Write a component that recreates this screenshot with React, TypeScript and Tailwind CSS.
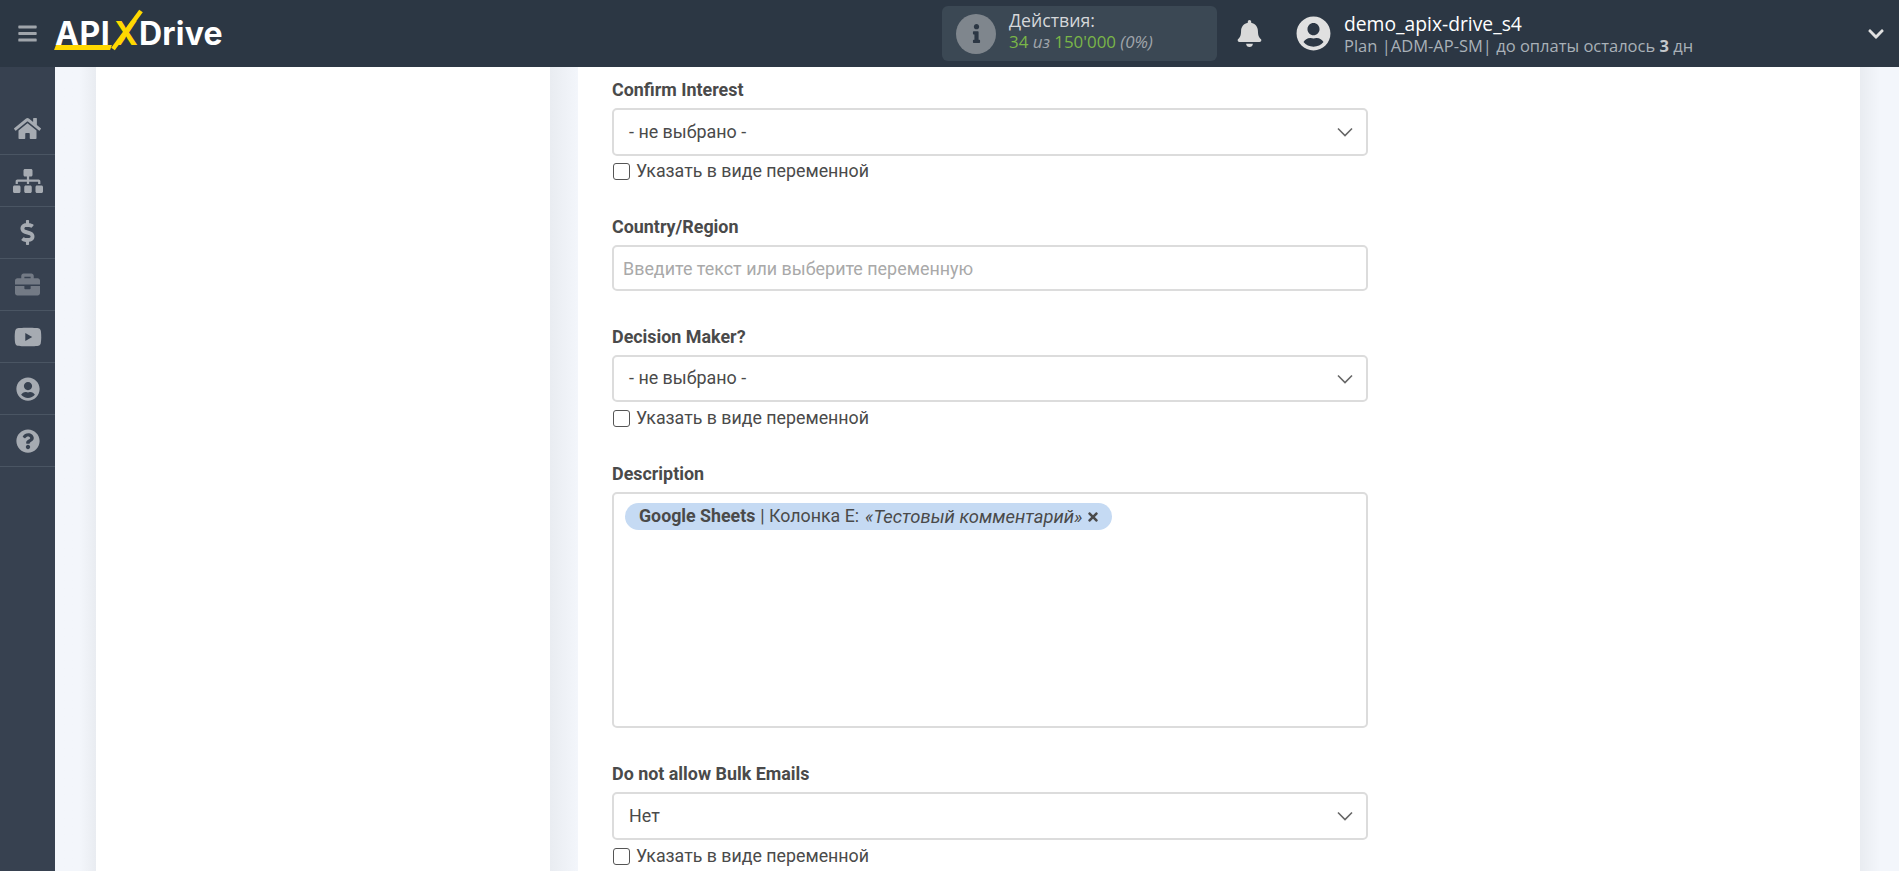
import { FaHome, FaSitemap, FaDollarSign, FaBriefcase, FaYoutube, FaUserCircle, FaQuestionCircle, FaBell, FaInfo, FaChevronDown, FaTimes, FaBars } from "react-icons/fa";

function Chevron() {
  return (
    <svg width="16" height="10" viewBox="0 0 16 10" fill="none" className="shrink-0">
      <path d="M1 1.5 L8 8.5 L15 1.5" stroke="#666" strokeWidth="1.6" />
    </svg>
  );
}

function Label({ children }: { children: React.ReactNode }) {
  return <div className="mb-[7px] h-[22px] text-[17.9px] leading-[22px] font-bold text-[#4a4a4a]">{children}</div>;
}

function Select({ value, label, h = "h-[47px]", gap = "mt-[4px]" }: { value: string; label: string; h?: string; gap?: string }) {
  return (
    <div>
      <Label>{label}</Label>
      <div className={`flex items-center justify-between rounded-[5px] border-2 border-[#dcdcdc] bg-white pl-[15px] pr-[13px] text-[17.9px] text-[#4a4a4a] ${h}`}>
        <span>{value}</span>
        <Chevron />
      </div>
      <div className={`flex h-[24px] items-center ${gap}`}>
        <span className="ml-[1px] mr-[6px] h-[17px] w-[17px] rounded-[3px] border border-[#555] bg-white" />
        <span className="text-[17.8px] text-[#4a4a4a]">Указать в виде переменной</span>
      </div>
    </div>
  );
}

const side = [
  { I: FaHome, s: 27, c: "#a6abb2" },
  { I: FaSitemap, s: 30, c: "#a6abb2" },
  { I: FaDollarSign, s: 25, c: "#a6abb2" },
  { I: FaBriefcase, s: 25, c: "#737a85" },
  { I: FaYoutube, s: 28, c: "#a6abb2" },
  { I: FaUserCircle, s: 24, c: "#a6abb2" },
  { I: FaQuestionCircle, s: 24, c: "#a6abb2" },
];

export default function App() {
  return (
    <div className="flex h-[871px] w-[1899px] flex-col overflow-hidden bg-[#f3f6fb] font-['Roboto',sans-serif]">
      <header className="flex h-[67px] shrink-0 items-center bg-[#2c3744]">
        <div className="ml-[17px] flex w-[21px] text-[#a0a5ab]">
          <FaBars size={21} />
        </div>
        <div className="relative ml-[17px] flex h-[67px] w-[170px] items-center font-['Inter',sans-serif] text-[32px] font-bold text-white">
          <span className="w-[58px] tracking-[0.5px]">API</span>
          <span className="flex w-[26px] justify-center font-bold text-[#ffd800]">X</span>
          <span className="tracking-[0.2px]">Drive</span>
          <span className="absolute top-[45px] left-[0px] h-[5px] w-[56px] -skew-x-[20deg] bg-[#ffd800]" />
          <svg className="absolute top-[9px] left-[56px]" width="32" height="42" viewBox="0 0 32 42" fill="none">
            <line x1="2" y1="40" x2="30" y2="2" stroke="#ffd800" strokeWidth="4.5" />
          </svg>
        </div>
        <div className="ml-[717px] flex h-[55px] w-[275px] items-center rounded-[6px] bg-[#3b4854] pl-[14px]">
          <div className="flex h-[40px] w-[40px] items-center justify-center rounded-full bg-[#7f868d] text-[#2c3744]">
            <FaInfo size={19} />
          </div>
          <div className="mb-[6px] ml-[13px] font-['Open_Sans',sans-serif]">
            <div className="text-[17.7px] leading-[22px] text-[#d5d7da]">Действия:</div>
            <div className="text-[16.9px] leading-[22px] text-[#7ab648]">
              34 <span className="text-[#a0a5ab] italic">из</span> 150'000 <span className="text-[#a0a5ab] italic">(0%)</span>
            </div>
          </div>
        </div>
        <div className="ml-[19px] text-[#d9d9d9]">
          <FaBell size={27} />
        </div>
        <div className="ml-[33px] text-[#e0e0e0]">
          <FaUserCircle size={35} />
        </div>
        <div className="ml-[13px] font-['Open_Sans',sans-serif]">
          <div className="text-[19.3px] leading-[23px] text-white">demo_apix-drive_s4</div>
          <div className="text-[16.5px] leading-[21px] text-[#a9b1b8]">
            Plan |ADM-AP-SM| до оплаты осталось <b className="text-[#c4c8cc]">3</b> дн
          </div>
        </div>
        <div className="ml-auto mr-[14px] text-[#e0e0e0]">
          <FaChevronDown size={18} />
        </div>
      </header>
      <div className="flex min-h-0 flex-1">
        <aside className="w-[55px] shrink-0 bg-[#374150] pt-[36px]">
          {side.map(({ I, s, c }, i) => (
            <div key={i} className="flex h-[52px] items-center justify-center border-b border-[#4a5563]" style={{ color: c }}>
              <I size={s} />
            </div>
          ))}
        </aside>
        <div className="w-[41px] shrink-0 bg-gradient-to-r from-[#f3f6fb] from-60% to-[#e9ecf1]" />
        <div className="w-[454px] shrink-0 bg-white" />
        <div className="w-[28px] shrink-0 bg-gradient-to-r from-[#e9ecf1] to-[#f3f6fb]" />
        <main className="w-[1282px] shrink-0 bg-white pl-[34px]">
          <div className="flex w-[756px] flex-col pt-[12px]">
            <div className="mb-[33px]">
              <Select label="Confirm Interest" value="- не выбрано -" h="h-[48px]" gap="mt-[3px]" />
            </div>
            <div className="mb-[35px]">
              <Label>Country/Region</Label>
              <div className="flex h-[46px] items-center rounded-[5px] border-2 border-[#dcdcdc] bg-white pt-[2px] pl-[9px] text-[17.9px] text-[#a9a9a9]">
                Введите текст или выберите переменную
              </div>
            </div>
            <div className="mb-[33px]">
              <Select label="Decision Maker?" value="- не выбрано -" />
            </div>
            <div className="mb-[35px]">
              <Label>Description</Label>
              <div className="h-[236px] rounded-[5px] border-2 border-[#dcdcdc] bg-white pt-[9px] pl-[11px]">
                <span className="inline-flex h-[27px] items-center rounded-[14px] bg-[#c5daf3] pr-[12px] pl-[14px] text-[17.8px] text-[#4a4a4a]">
                  <b>Google Sheets</b>
                  <span className="ml-[5px]">| Колонка E:</span>
                  <i className="ml-[6px] text-[18.4px]">«Тестовый комментарий»</i>
                  <FaTimes size={14} className="ml-[4px]" />
                </span>
              </div>
            </div>
            <Select label="Do not allow Bulk Emails" value="Нет" h="h-[48px]" />
          </div>
        </main>
        <div className="w-[20px] shrink-0 bg-gradient-to-r from-[#e9ecf1] to-[#f3f6fb]" />
      </div>
    </div>
  );
}
